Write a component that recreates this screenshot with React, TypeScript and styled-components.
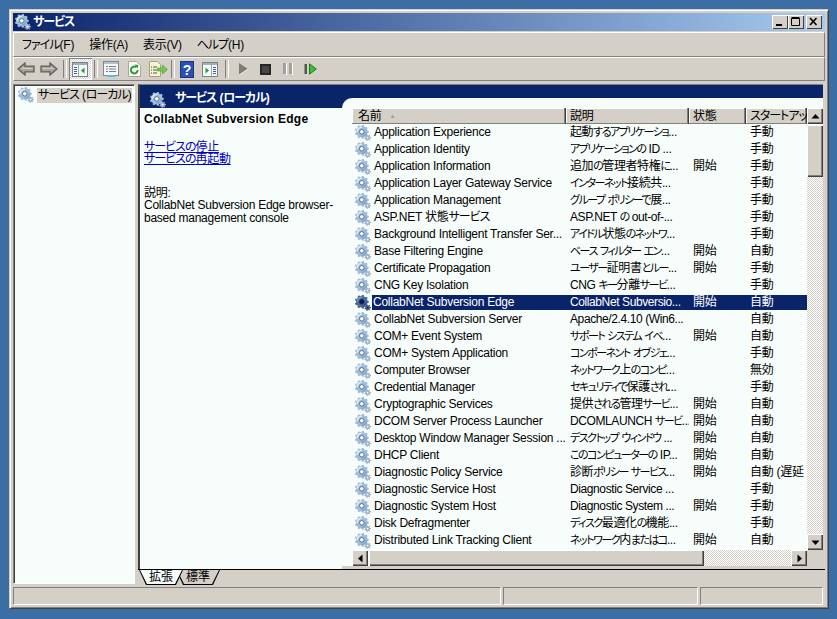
import styled, { createGlobalStyle } from 'styled-components'

type Service = {
  name: string
  desc: string
  state?: string
  startup: string
}

const services: Service[] = [
  { name: 'Application Experience', desc: '起動するアプリケーショ...', startup: '手動' },
  { name: 'Application Identity', desc: 'アプリケーションの ID ...', startup: '手動' },
  { name: 'Application Information', desc: '追加の管理者特権に...', state: '開始', startup: '手動' },
  { name: 'Application Layer Gateway Service', desc: 'インターネット接続共...', startup: '手動' },
  { name: 'Application Management', desc: 'グループ ポリシーで展...', startup: '手動' },
  { name: 'ASP.NET 状態サービス', desc: 'ASP.NET の out-of-...', startup: '手動' },
  { name: 'Background Intelligent Transfer Ser...', desc: 'アイドル状態のネットワ...', startup: '手動' },
  { name: 'Base Filtering Engine', desc: 'ベース フィルター エン...', state: '開始', startup: '自動' },
  { name: 'Certificate Propagation', desc: 'ユーザー証明書とルー...', state: '開始', startup: '手動' },
  { name: 'CNG Key Isolation', desc: 'CNG キー分離サービ...', startup: '手動' },
  { name: 'CollabNet Subversion Edge', desc: 'CollabNet Subversio...', state: '開始', startup: '自動' },
  { name: 'CollabNet Subversion Server', desc: 'Apache/2.4.10 (Win6...', startup: '自動' },
  { name: 'COM+ Event System', desc: 'サポート システム イベ...', state: '開始', startup: '自動' },
  { name: 'COM+ System Application', desc: 'コンポーネント オブジェ...', startup: '手動' },
  { name: 'Computer Browser', desc: 'ネットワーク上のコンピ...', startup: '無効' },
  { name: 'Credential Manager', desc: 'セキュリティで保護され...', startup: '手動' },
  { name: 'Cryptographic Services', desc: '提供される管理サービ...', state: '開始', startup: '自動' },
  { name: 'DCOM Server Process Launcher', desc: 'DCOMLAUNCH サービ...', state: '開始', startup: '自動' },
  { name: 'Desktop Window Manager Session ...', desc: 'デスクトップ ウィンドウ ...', state: '開始', startup: '自動' },
  { name: 'DHCP Client', desc: 'このコンピューターの IP...', state: '開始', startup: '自動' },
  { name: 'Diagnostic Policy Service', desc: '診断ポリシー サービス...', state: '開始', startup: '自動 (遅延' },
  { name: 'Diagnostic Service Host', desc: 'Diagnostic Service ...', startup: '手動' },
  { name: 'Diagnostic System Host', desc: 'Diagnostic System ...', state: '開始', startup: '手動' },
  { name: 'Disk Defragmenter', desc: 'ディスク最適化の機能...', startup: '手動' },
  { name: 'Distributed Link Tracking Client', desc: 'ネットワーク内またはコ...', state: '開始', startup: '自動' },
]

const gearPath = (cx: number, cy: number, outer: number, inner: number, teeth: number) => {
  const pts: string[] = []
  const step = (Math.PI * 2) / teeth
  for (let i = 0; i < teeth; i++) {
    const a = i * step
    const spots = [
      [a - step * 0.32, inner],
      [a - step * 0.18, outer],
      [a + step * 0.18, outer],
      [a + step * 0.32, inner],
    ]
    spots.forEach(([ang, r]) => {
      pts.push(`${(cx + Math.cos(ang) * r).toFixed(2)} ${(cy + Math.sin(ang) * r).toFixed(2)}`)
    })
  }
  return `M${pts.join('L')}z`
}

const bigGear = gearPath(6.8, 6.8, 7, 5.8, 9)
const smallGear = gearPath(12.6, 12.6, 3.4, 2.4, 7)

const Gear = ({ dark = false }: { dark?: boolean }) => (
  <svg width="16" height="16" viewBox="0 0 16 16" style={{ flex: 'none' }}>
    <path d={smallGear} fill={dark ? '#46597a' : '#9fb0c4'} />
    <circle cx="12.600" cy="12.600" r="0.900" fill={dark ? '#10245a' : '#f4f8fc'} />
    <path d={bigGear} fill={dark ? '#4c6a96' : '#9dbcde'} />
    <path d="M2.300 6.800a4.500 4.500 0 0 1 4.500-4.500" fill="none" stroke={dark ? '#7f9cc4' : '#e6f0fa'} strokeWidth="1.600" />
    <path d="M11.300 6.800a4.500 4.500 0 0 1-4.500 4.500" fill="none" stroke={dark ? '#34507c' : '#7fa0c6'} strokeWidth="1.200" />
    <circle cx="6.800" cy="6.800" r="2.300" fill={dark ? '#0a1c4c' : '#fbfdff'} stroke={dark ? '#16284e' : '#5c7186'} strokeWidth="1" />
  </svg>
)

const BackIcon = () => (
  <svg width="18" height="14">
    <path d="M1 7l7-6v3.200h9v5.600H8V13z" fill="#a4a49c" stroke="#5e5e58" strokeWidth="1.300" />
    <path d="M4 7l3-2.600v1.600h8.500v1z" fill="#cfcfc8" />
  </svg>
)

const ForwardIcon = () => (
  <svg width="18" height="14">
    <path d="M17 7l-7-6v3.200H1v5.600h9V13z" fill="#a4a49c" stroke="#5e5e58" strokeWidth="1.300" />
    <path d="M2.500 6h8.500v-1.600l3 2.600H2.500z" fill="#cfcfc8" />
  </svg>
)

const PaneLeftIcon = () => (
  <svg width="16" height="15">
    <rect x="0.500" y="0.500" width="15" height="14" fill="#f8f8f4" stroke="#77848f" />
    <rect x="1" y="1" width="14" height="2" fill="#9fb0bf" />
    <path d="M2 5.500h3M2 7.500h3M2 9.500h3M2 11.500h3" stroke="#2f62b0" />
    <path d="M6.500 3v11" stroke="#9aa8b4" />
    <path d="M12.500 5.500v6l-3.500-3z" fill="#1f9a4c" />
  </svg>
)

const PropsIcon = () => (
  <svg width="16" height="16">
    <rect x="0.500" y="0.500" width="15" height="14" fill="#f6f6f2" stroke="#7c8a98" />
    <rect x="1" y="1" width="14" height="2" fill="#b4c0cb" />
    <path d="M3 5.500h2M6 5.500h7M3 8h2M6 8h7M3 10.500h2M6 10.500h7" stroke="#74828f" />
    <rect x="4" y="14" width="8" height="2" fill="#4cc0e8" />
  </svg>
)

const RefreshIcon = () => (
  <svg width="15" height="16">
    <path d="M1.500 0.500h8l4 4v11h-12z" fill="#fdfdf6" stroke="#a8a898" />
    <path d="M10.700 9a3.400 3.400 0 1 1-1.300-2.700" fill="none" stroke="#2c9c3a" strokeWidth="2" />
    <path d="M7.500 3.500l4 0.500-1 3.500z" fill="#2c9c3a" />
  </svg>
)

const ExportIcon = () => (
  <svg width="20" height="16">
    <path d="M1.500 0.500h8l3 3v12h-11z" fill="#f8f4d0" stroke="#a4a280" />
    <path d="M3 6h1M5 6h4M3 9h1M5 9h4M3 12h1M5 12h4" stroke="#4d5560" />
    <path d="M9.500 7h5V4l5 4.500-5 4.500v-3h-5z" fill="#74c84c" stroke="#4e9a34" strokeWidth="0.600" />
  </svg>
)

const HelpIcon = () => (
  <svg width="14" height="17">
    <rect x="0.500" y="0.500" width="13" height="16" fill="#2a50b4" stroke="#1c3478" />
    <text x="7" y="13.500" textAnchor="middle" fontSize="14" fontWeight="700" fontFamily="Liberation Sans, sans-serif" fill="#fff">?</text>
  </svg>
)

const PaneRightIcon = () => (
  <svg width="16" height="15">
    <rect x="0.500" y="0.500" width="15" height="14" fill="#f8f8f4" stroke="#77848f" />
    <rect x="1" y="1" width="14" height="2" fill="#9fb0bf" />
    <path d="M3.500 5.500v6l3.500-3z" fill="#1f9a4c" />
    <path d="M9.500 3v11" stroke="#9aa8b4" />
    <path d="M11 5.500h3M11 7.500h3M11 9.500h3M11 11.500h3" stroke="#2f62b0" />
  </svg>
)

const PlayIcon = () => (
  <svg width="9" height="12">
    <path d="M0 0l9 6-9 6z" fill="#7c7c78" />
    <path d="M0 12l9-6" stroke="#fff" strokeWidth="0.800" />
  </svg>
)

const StopIcon = () => (
  <svg width="11" height="11">
    <rect width="11" height="11" fill="#262626" />
    <rect x="2" y="2" width="7" height="7" fill="#474747" />
  </svg>
)

const PauseIcon = () => (
  <svg width="10" height="12">
    <path d="M0 0h3v11H0zM6 0h3v11H6z" fill="#a0a09c" />
    <path d="M3.500 0v12M9.500 0v12" stroke="#fff" />
  </svg>
)

const RestartIcon = () => (
  <svg width="13" height="12">
    <rect x="0.500" y="1" width="2.500" height="10" fill="#55554f" />
    <path d="M5.500 0.800l6.800 5.200-6.800 5.200z" fill="#3cc03c" stroke="#1e7a1e" />
  </svg>
)

const ArrowUp = () => <svg width="9" height="5"><path d="M4.500 0l4 4.500h-8z" fill="#000" /></svg>
const ArrowDown = () => <svg width="9" height="5"><path d="M4.500 5l4-4.500h-8z" fill="#000" /></svg>
const ArrowLeft = () => <svg width="5" height="9"><path d="M0 4.500l4.500-4v8z" fill="#000" /></svg>
const ArrowRight = () => <svg width="5" height="9"><path d="M5 4.500l-4.500-4v8z" fill="#000" /></svg>

// the old UI font has narrow kana, so kana runs get tightened separately
const Jp = ({ text }: { text: string }) => (
  <>
    {text.split(/([\u3040-\u30ff]+)/).map((part, i) =>
      i % 2 === 1 ? <Kana key={i}>{part}</Kana> : part
    )}
  </>
)

const App = () => {
  return (
    <>
      <GlobalStyle />
      <Desktop>
        <Frame>
          <TitleBar>
            <Gear />
            <TitleText><Jp text="サービス" /></TitleText>
            <Caption>
              <CaptionButton>
                <svg width="10" height="10"><rect x="1" y="7" width="6" height="2" fill="#000" /></svg>
              </CaptionButton>
              <CaptionButton>
                <svg width="10" height="10"><path d="M0.500 1.500h8v7h-8z M0.500 0.500h8" fill="none" stroke="#000" /></svg>
              </CaptionButton>
              <CaptionButton $gap>
                <svg width="10" height="10"><path d="M1 1l6.500 7M7.500 1l-6.500 7" stroke="#000" strokeWidth="1.600" /></svg>
              </CaptionButton>
            </Caption>
          </TitleBar>
          <MenuBar>
            <span><Jp text="ファイル(F)" /></span>
            <span>操作(A)</span>
            <span>表示(V)</span>
            <span><Jp text="ヘルプ(H)" /></span>
          </MenuBar>
          <ToolBar>
            <ToolIcon><BackIcon /></ToolIcon>
            <ToolIcon><ForwardIcon /></ToolIcon>
            <Sep />
            <ToolIcon $active><PaneLeftIcon /></ToolIcon>
            <Sep />
            <ToolIcon><PropsIcon /></ToolIcon>
            <ToolIcon><RefreshIcon /></ToolIcon>
            <ToolIcon><ExportIcon /></ToolIcon>
            <Sep $w={5} />
            <ToolIcon><HelpIcon /></ToolIcon>
            <ToolIcon><PaneRightIcon /></ToolIcon>
            <Sep $w={10} />
            <ToolIcon $w={22}><PlayIcon /></ToolIcon>
            <ToolIcon $w={22}><StopIcon /></ToolIcon>
            <ToolIcon $w={23}><PauseIcon /></ToolIcon>
            <ToolIcon $w={23}><RestartIcon /></ToolIcon>
          </ToolBar>
          <Panes>
            <TreePane>
              <TreeRow>
                <Gear />
                <TreeLabel><Jp text="サービス (ローカル)" /></TreeLabel>
              </TreeRow>
            </TreePane>
            <DetailPane>
              <PaneBody>
                <InfoColumn>
                  <PaneHeader>
                    <Gear />
                    <PaneTitle><Jp text="サービス (ローカル)" /></PaneTitle>
                  </PaneHeader>
                  <InfoBody>
                    <InfoTitle>CollabNet Subversion Edge</InfoTitle>
                    <ActionLink><Jp text="サービスの停止" /></ActionLink>
                    <ActionLink><Jp text="サービスの再起動" /></ActionLink>
                    <DescLabel>説明:</DescLabel>
                    <DescText>CollabNet Subversion Edge browser-based management console</DescText>
                  </InfoBody>
                </InfoColumn>
                <ListColumn>
                  <ListPanel>
                    <ListArea>
                      <ListMain>
                        <HeaderRow>
                          <NameHeader>
                            名前<SortMark>▲</SortMark>
                          </NameHeader>
                          <HeaderCell $w={123}>説明</HeaderCell>
                          <HeaderCell $w={57}>状態</HeaderCell>
                          <HeaderCell $w={61}><Jp text="スタートアップ" /></HeaderCell>
                        </HeaderRow>
                        <Rows>
                          {services.map((s) => {
                            const selected = s.name === 'CollabNet Subversion Edge'
                            return (
                              <Row key={s.name}>
                                <NameCell>
                                  <Gear dark={selected} />
                                  <NameText $selected={selected}><Jp text={s.name} /></NameText>
                                </NameCell>
                                <DescCell $w={123} $selected={selected}><Jp text={s.desc} /></DescCell>
                                <Cell $w={57} $selected={selected}>{s.state}</Cell>
                                <Cell $w={61} $selected={selected}>{s.startup}</Cell>
                              </Row>
                            )
                          })}
                          <Row>
                            <NameCell>
                              <Gear />
                            </NameCell>
                          </Row>
                        </Rows>
                        <HScroll>
                          <ScrollButton><ArrowLeft /></ScrollButton>
                          <HThumb />
                          <Track />
                          <ScrollButton><ArrowRight /></ScrollButton>
                        </HScroll>
                      </ListMain>
                      <VScroll>
                        <ScrollButton><ArrowUp /></ScrollButton>
                        <VThumb />
                        <Track />
                        <ScrollButton><ArrowDown /></ScrollButton>
                        <ScrollCorner />
                      </VScroll>
                    </ListArea>
                  </ListPanel>
                </ListColumn>
              </PaneBody>
              <TabStrip>
                <Tab $active><TabText>拡張</TabText></Tab>
                <Tab><TabText>標準</TabText></Tab>
              </TabStrip>
            </DetailPane>
          </Panes>
          <StatusBar>
            <StatusCell $grow />
            <StatusCell $w={195} />
            <StatusCell $w={123} />
          </StatusBar>
        </Frame>
      </Desktop>
    </>
  )
}

export default App

const GlobalStyle = createGlobalStyle`
  html, body {
    margin: 0;
    padding: 0;
    height: 100%;
    background: #3a6ea5;
    overflow: hidden;
  }
  * {
    box-sizing: border-box;
  }
  body {
    font-family: "Liberation Sans", "Noto Sans CJK JP", sans-serif;
    font-size: 12px;
    font-feature-settings: "palt";
    letter-spacing: -0.25px;
    color: #000;
  }
`

const Kana = styled.span`
  letter-spacing: -1px;
`

const Desktop = styled.div`
  width: 837px;
  height: 619px;
  padding: 9px 8px 10px 9px;
`

const Frame = styled.div`
  width: 820px;
  height: 600px;
  display: flex;
  flex-direction: column;
  background: #d4d0c8;
  padding: 3px;
  border: 1px solid;
  border-color: #d4d0c8 #404040 #404040 #d4d0c8;
  box-shadow: inset 1px 1px 0 #fff, inset -1px -1px 0 #808080;
`

const TitleBar = styled.div`
  height: 18px;
  flex: none;
  display: flex;
  align-items: center;
  gap: 2px;
  padding: 0 3px 0 2px;
  margin-bottom: 1px;
  background: linear-gradient(to right, #0a246a, #a6caf0);
`

const TitleText = styled.span`
  color: #fff;
  font-weight: 700;
  line-height: 18px;
`

const Caption = styled.div`
  margin-left: auto;
  display: flex;
`

const CaptionButton = styled.div<{ $gap?: boolean }>`
  width: 16px;
  height: 14px;
  margin-left: ${(p) => (p.$gap ? '2px' : '0')};
  display: flex;
  align-items: center;
  justify-content: center;
  background: #d4d0c8;
  box-shadow: inset 1px 1px 0 #fff, inset -1px -1px 0 #404040;
`

const MenuBar = styled.div`
  height: 25px;
  flex: none;
  display: flex;
  align-items: center;
  gap: 15px;
  padding: 0 0 2px 8px;
  border: 1px solid;
  border-color: #fff #808080 #808080 #fff;
`

const ToolBar = styled.div`
  height: 24px;
  flex: none;
  display: flex;
  align-items: center;
  border: 1px solid;
  border-color: #fff #808080 #808080 #fff;
`

const ToolIcon = styled.div<{ $active?: boolean; $w?: number }>`
  width: ${(p) => p.$w ?? 23.5}px;
  height: 22px;
  flex: none;
  display: flex;
  align-items: center;
  justify-content: center;
  ${(p) =>
    p.$active &&
    `
    background: repeating-conic-gradient(#fff 0 25%, #d4d0c8 0 50%) 0 0 / 2px 2px;
    box-shadow: inset 1px 1px 0 #808080, inset -1px -1px 0 #fff;
  `}
`

const Sep = styled.div<{ $w?: number }>`
  width: ${(p) => p.$w ?? 7.5}px;
  height: 18px;
  flex: none;
  display: flex;
  justify-content: center;
  &::before {
    content: '';
    width: 2px;
    border-left: 1px solid #808080;
    border-right: 1px solid #fff;
  }
`

const Panes = styled.div`
  flex: 1;
  min-height: 0;
  display: flex;
  gap: 3px;
  margin: 3px 0;
`

const TreePane = styled.div`
  width: 122px;
  flex: none;
  background: #f7fdfa;
  padding: 2px 0 0 4px;
  border: 1px solid;
  border-color: #808080 #fff #fff #808080;
  box-shadow: inset 1px 1px 0 #404040;
`

const TreeRow = styled.div`
  display: flex;
  align-items: center;
  gap: 3px;
  height: 16px;
`

const TreeLabel = styled.span`
  background: #d4d0c8;
  padding: 0 1px;
  line-height: 15px;
  white-space: nowrap;
`

const DetailPane = styled.div`
  flex: 1;
  min-width: 0;
  display: flex;
  flex-direction: column;
`

const PaneBody = styled.div`
  flex: 1;
  min-height: 0;
  display: flex;
  margin-right: 2px;
  background: #f7fdfa;
  border-left: 2px solid #404040;
  border-top: 1px solid #808080;
`

const InfoColumn = styled.div`
  width: 202px;
  flex: none;
  display: flex;
  flex-direction: column;
`

const PaneHeader = styled.div`
  height: 23px;
  flex: none;
  display: flex;
  align-items: flex-start;
  gap: 9px;
  padding: 7px 0 0 10px;
  background: #0a246a;
`

const PaneTitle = styled.span`
  color: #fff;
  font-weight: 700;
  line-height: 16px;
  margin-top: -2px;
  white-space: nowrap;
`

const InfoBody = styled.div`
  flex: 1;
  padding: 4px 2px 0 4px;
`

const InfoTitle = styled.div`
  font-weight: 700;
  line-height: 14px;
  letter-spacing: 0.28px;
  margin-bottom: 15px;
`

const ActionLink = styled.a`
  display: block;
  color: #0000c0;
  text-decoration: underline;
  line-height: 12px;
`

const DescLabel = styled.div`
  margin-top: 22px;
  line-height: 12px;
`

const DescText = styled.div`
  line-height: 12.5px;
`

const ListColumn = styled.div`
  flex: 1;
  min-width: 0;
  display: flex;
  flex-direction: column;
  background: #0a246a;
`

const ListPanel = styled.div`
  flex: 1;
  min-height: 0;
  margin-top: 13px;
  padding: 10px 0 0 10px;
  background: #f7fdfa;
  border-top-left-radius: 10px;
  border-bottom: 3px solid #d4d0c8;
`

const ListArea = styled.div`
  height: 458px;
  display: flex;
`

const ListMain = styled.div`
  flex: 1;
  min-width: 0;
  display: flex;
  flex-direction: column;
`

const HeaderRow = styled.div`
  height: 16px;
  flex: none;
  display: flex;
`

const HeaderCell = styled.div<{ $w: number }>`
  width: ${(p) => p.$w}px;
  flex: none;
  padding-left: 4px;
  line-height: 16px;
  white-space: nowrap;
  overflow: hidden;
  background: #d4d0c8;
  box-shadow: inset -1px 0 0 #404040, inset -2px 0 0 #808080, inset 0 -1px 0 #808080, inset 1px 1px 0 #fff;
`

const NameHeader = styled(HeaderCell).attrs({ $w: 214 })`
  padding-left: 6px;
`

const SortMark = styled.span`
  font-size: 6px;
  color: #9a9a9a;
  margin-left: 8px;
  vertical-align: 2px;
`

const Rows = styled.div`
  flex: 1;
  min-height: 0;
  overflow: hidden;
`

const Row = styled.div`
  height: 17px;
  display: flex;
  align-items: center;
`

const NameCell = styled.div`
  width: 214px;
  flex: none;
  display: flex;
  align-items: center;
  padding-left: 3px;
  gap: 1px;
`

const NameText = styled.span<{ $selected?: boolean }>`
  flex: 1;
  min-width: 0;
  line-height: 15px;
  padding-left: ${(p) => (p.$selected ? '1px' : '2px')};
  white-space: nowrap;
  overflow: hidden;
  background: ${(p) => (p.$selected ? '#0a246a' : 'transparent')};
  color: ${(p) => (p.$selected ? '#fff' : '#000')};
`

const Cell = styled.div<{ $w: number; $selected?: boolean }>`
  width: ${(p) => p.$w}px;
  height: 15px;
  flex: none;
  padding-left: 4px;
  line-height: 15px;
  white-space: nowrap;
  overflow: hidden;
  background: ${(p) => (p.$selected ? '#0a246a' : 'transparent')};
  color: ${(p) => (p.$selected ? '#fff' : '#000')};
`

const DescCell = styled(Cell)`
  letter-spacing: -0.4px;
  ${Kana} {
    font-size: 11px;
    letter-spacing: -1.5px;
  }
`

const HScroll = styled.div`
  height: 16px;
  flex: none;
  display: flex;
`

const VScroll = styled.div`
  width: 16px;
  flex: none;
  display: flex;
  flex-direction: column;
`

const ScrollButton = styled.div`
  width: 16px;
  height: 16px;
  flex: none;
  display: flex;
  align-items: center;
  justify-content: center;
  background: #d4d0c8;
  box-shadow: inset 1px 1px 0 #fff, inset -1px -1px 0 #404040, inset -2px -2px 0 #808080;
`

const ScrollCorner = styled.div`
  height: 16px;
  flex: none;
  background: #d4d0c8;
`

const HThumb = styled.div`
  width: 335px;
  flex: none;
  margin-left: 1px;
  background: #d4d0c8;
  box-shadow: inset 1px 1px 0 #fff, inset -1px -1px 0 #404040, inset -2px -2px 0 #808080;
`

const VThumb = styled.div`
  height: 52px;
  flex: none;
  margin-top: 1px;
  background: #d4d0c8;
  box-shadow: inset 1px 1px 0 #fff, inset -1px -1px 0 #404040, inset -2px -2px 0 #808080;
`

const Track = styled.div`
  flex: 1;
  background: repeating-conic-gradient(#fff 0 25%, #d4d0c8 0 50%) 0 0 / 2px 2px;
`

const TabStrip = styled.div`
  height: 15px;
  flex: none;
  display: flex;
  align-items: flex-start;
  padding-left: 1px;
  border-top: 1px solid #000;
`

const Tab = styled.div<{ $active?: boolean }>`
  position: relative;
  width: 44px;
  height: 15px;
  margin-left: ${(p) => (p.$active ? '0' : '-7px')};
  padding: 0 0 0 10px;
  z-index: ${(p) => (p.$active ? 1 : 0)};
  background: #000;
  clip-path: polygon(0 0, 100% 0, calc(100% - 7px) 100%, 7px 100%);
  &::before {
    content: '';
    position: absolute;
    inset: 0 1px 1px 1px;
    background: ${(p) => (p.$active ? '#f7fdfa' : '#d4d0c8')};
    clip-path: polygon(0 0, 100% 0, calc(100% - 7px) 100%, 7px 100%);
  }
`

const TabText = styled.span`
  position: relative;
  line-height: 15px;
  letter-spacing: 0;
  display: block;
`

const StatusBar = styled.div`
  height: 18px;
  flex: none;
  display: flex;
  gap: 2px;
  padding-right: 2px;
`

const StatusCell = styled.div<{ $w?: number; $grow?: boolean }>`
  flex: ${(p) => (p.$grow ? '1' : 'none')};
  width: ${(p) => (p.$w ? `${p.$w}px` : 'auto')};
  border: 1px solid;
  border-color: #808080 #fff #fff #808080;
`
